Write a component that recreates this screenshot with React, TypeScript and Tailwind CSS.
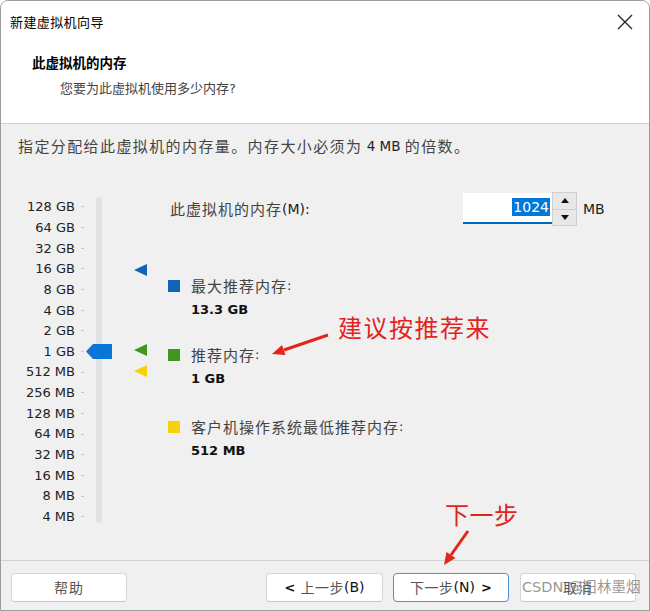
import React from "react";

const ZH = "font-['Noto_Sans_CJK_SC',sans-serif]";

const labels = [
  "128 GB",
  "64 GB",
  "32 GB",
  "16 GB",
  "8 GB",
  "4 GB",
  "2 GB",
  "1 GB",
  "512 MB",
  "256 MB",
  "128 MB",
  "64 MB",
  "32 MB",
  "16 MB",
  "8 MB",
  "4 MB",
];

function Marker({ color, top }: { color: string; top: number }) {
  return (
    <svg className="absolute left-[133px]" style={{ top }} width="13" height="12" viewBox="0 0 13 12">
      <polygon points="0,6 13,0 13,12" fill={color} />
    </svg>
  );
}

function Legend({ color, label, value, className }: { color: string; label: string; value: string; className: string }) {
  return (
    <div className={className}>
      <div className="flex h-[22px] items-center">
        <span className="mr-[11px] h-[12px] w-[12px] shrink-0" style={{ background: color }} />
        <span className={`${ZH} text-[15px] tracking-[1px] text-[#444]`}>{label}</span>
        <span className="text-[13px] text-[#222]">:</span>
      </div>
      <div className="mt-[2px] flex h-[22px] items-center pl-[23px] text-[13px] font-bold text-[#111]">{value}</div>
    </div>
  );
}

function Btn({ children, primary, className = "" }: { children: React.ReactNode; primary?: boolean; className?: string }) {
  return (
    <div
      className={`flex h-[29px] items-center justify-center rounded-[4px] border bg-white text-[13px] text-[#111] ${
        primary ? "border-[#4f8fd4]" : "border-[#d6d6d6] border-b-[#c6c6c6]"
      } ${className}`}
    >
      {children}
    </div>
  );
}

export default function App() {
  return (
    <div className="relative flex h-[611px] w-[650px] flex-col overflow-hidden rounded-t-[8px] border border-[#9c9c9c] bg-[#f0f0f0] font-['DejaVu_Sans','Noto_Sans_CJK_SC',sans-serif] text-[13px] text-[#1a1a1a]">
      {/* header */}
      <div className="h-[123px] shrink-0 border-b border-[#d2d2d2] bg-white">
        <div className="flex h-[42px] items-center justify-between pl-[9px] pr-[16px]">
          <span className={`${ZH} text-[13px] tracking-[0.4px] text-black`}>新建虚拟机向导</span>
          <svg width="16" height="16" viewBox="0 0 16 16" className="mt-[-1px]">
            <path d="M1 1 L15 15 M15 1 L1 15" stroke="#222" strokeWidth="1.3" />
          </svg>
        </div>
        <div className={`${ZH} pl-[31px] pt-[8px] text-[13.5px] font-bold leading-[22px] text-black`}>此虚拟机的内存</div>
        <div className={`${ZH} pl-[59px] pt-[4px] text-[13px] leading-[22px] text-[#444]`}>
          您要为此虚拟机使用多少内存<span className="font-['DejaVu_Sans'] text-[13px]">?</span>
        </div>
      </div>

      {/* body */}
      <div className="h-[436px] shrink-0">
        <div className="mt-[12px] flex h-[20px] items-center pl-[17px]">
          <span className={`${ZH} text-[15px] tracking-[1.4px] text-[#444]`}>指定分配给此虚拟机的内存量。内存大小必须为</span>
          <span className="whitespace-pre text-[13.5px] text-[#222]"> 4 MB </span>
          <span className={`${ZH} text-[15px] tracking-[1.4px] text-[#444]`}>的倍数。</span>
        </div>

        <div className="mt-[36px] flex">
          {/* slider */}
          <div className="relative flex w-[167px] shrink-0 pt-[4.67px]">
            <div className="flex w-[83px] flex-col">
              {labels.map((l) => (
                <div key={l} className="flex h-[20.67px] items-center justify-end">
                  <span className="text-[13px] text-[#222]">{l}</span>
                  <span className="ml-[6px] h-px w-[3px] bg-[#c8c8c8]" />
                </div>
              ))}
            </div>
            <div className="ml-[12px] mt-[0.5px] h-[326px] w-[6px] rounded-[2px] bg-[#e1e1e1]" />

            <svg className="absolute left-[85px] top-[152px]" width="26" height="15" viewBox="0 0 26 15">
              <polygon points="0,7.5 7,0 26,0 26,15 7,15" fill="#0a76d8" />
            </svg>
            <Marker color="#1363b8" top={72} />
            <Marker color="#40961e" top={152} />
            <Marker color="#f7d20a" top={173} />
          </div>

          {/* right panel */}
          <div className="flex flex-col">
            <div className="flex h-[34px] items-center">
              <div className="flex w-[295px] items-center pl-[2px]">
                <span className={`${ZH} text-[15px] tracking-[1px] text-[#444]`}>此虚拟机的内存</span>
                <span className="text-[14px] text-[#222]">(M):</span>
              </div>
              <div className="mt-[-2px] flex h-[31px] w-[89px] items-center justify-end border-b-2 border-[#0067c0] bg-white pr-[2px]">
                <span className="bg-[#0078d7] px-[1px] text-[14px] leading-[18px] text-white">1024</span>
              </div>
              <div className="flex h-[34px] w-[25px] flex-col border border-[#cfcfcf] bg-[#e8e8e8]">
                <div className="flex flex-1 items-center justify-center border-b border-[#cfcfcf]">
                  <svg width="8" height="5" viewBox="0 0 8 5">
                    <polygon points="0,5 4,0 8,5" fill="#111" />
                  </svg>
                </div>
                <div className="flex flex-1 items-center justify-center">
                  <svg width="8" height="5" viewBox="0 0 8 5">
                    <polygon points="0,0 8,0 4,5" fill="#111" />
                  </svg>
                </div>
              </div>
              <span className="ml-[6px] text-[14px] text-[#222]">MB</span>
            </div>

            <Legend className="mt-[49px]" color="#1363b8" label="最大推荐内存" value="13.3 GB" />
            <Legend className="mt-[23px]" color="#40961e" label="推荐内存" value="1 GB" />
            <Legend className="mt-[26px]" color="#f7d20a" label="客户机操作系统最低推荐内存" value="512 MB" />
          </div>
        </div>
      </div>

      {/* footer */}
      <div className="flex flex-1 border-t border-[#d2d2d2] pl-[10px] pr-[13px] pt-[12px]">
        <Btn className="w-[116px]">
          <span className={`${ZH} text-[14px] tracking-[1px] text-[#555]`}>帮助</span>
        </Btn>
        <Btn className="ml-auto w-[117px]">
          <span className="font-bold">&lt;</span>
          <span className={`${ZH} ml-[5px] text-[14px] tracking-[0.5px] text-[#555]`}>上一步</span>
          <span className="text-[14px]">(B)</span>
        </Btn>
        <Btn primary className="ml-[10px] w-[116px]">
          <span className={`${ZH} text-[14px] tracking-[0.5px] text-[#555]`}>下一步</span>
          <span className="text-[14px]">(N)</span>
          <span className="ml-[6px] font-bold">&gt;</span>
        </Btn>
        <Btn className="ml-[11px] w-[116px]">
          <span className={`${ZH} text-[14px] tracking-[1px] text-[#555]`}>取消</span>
        </Btn>
      </div>

      {/* annotations */}
      <div className={`${ZH} absolute left-[337px] top-[311px] text-[24px] leading-[30px] tracking-[1.5px] text-[#e3241c]`}>
        建议按推荐来
      </div>
      <div className={`${ZH} absolute left-[444px] top-[498px] text-[24px] leading-[30px] tracking-[0.5px] text-[#e3241c]`}>
        下一步
      </div>
      <svg className="pointer-events-none absolute left-0 top-0" width="650" height="611">
        <line x1="327" y1="334" x2="283" y2="349" stroke="#e3241c" strokeWidth="3" />
        <polygon points="271,353 284.5,354 281,344" fill="#e3241c" />
        <line x1="467" y1="530" x2="450" y2="554" stroke="#e3241c" strokeWidth="3" />
        <polygon points="443,564 454.5,557 445.5,551" fill="#e3241c" />
      </svg>
      <div className="absolute left-[521px] top-[575px] whitespace-nowrap text-[14.5px] leading-[20px] text-[#7d7d7d]/80">
        CSDN @<span className={ZH}>旧林墨烟</span>
      </div>
    </div>
  );
}
